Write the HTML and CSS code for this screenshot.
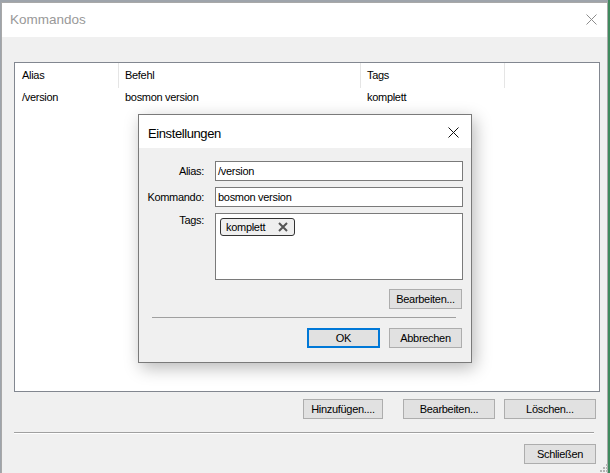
FILE: index.html
```html
<!DOCTYPE html>
<html>
<head>
<meta charset="utf-8">
<link rel="stylesheet" href="styles.css">
</head>
<body>
<div class="desk">
  <div class="win">
    <div class="titlebar">
      <span class="title">Kommandos</span>
      <svg class="xclose" width="11" height="11" viewBox="0 0 11 11"><path d="M0.5 0.5 L10.5 10.5 M10.5 0.5 L0.5 10.5" stroke="#8c8c8c" stroke-width="1" fill="none"/></svg>
    </div>
    <div class="content">
      <div class="list">
        <div class="lrow head">
          <div class="c c1">Alias</div>
          <div class="c c2">Befehl</div>
          <div class="c c3">Tags</div>
          <div class="c c4"></div>
        </div>
        <div class="lrow item">
          <div class="c c1">/version</div>
          <div class="c c2">bosmon version</div>
          <div class="c c3">komplett</div>
        </div>
      </div>
      <div class="btnrow">
        <button class="btn b-add">Hinzufügen....</button>
        <button class="btn b-edit">Bearbeiten...</button>
        <button class="btn b-del">Löschen...</button>
      </div>
      <div class="sep"></div>
      <div class="btnrow close-row">
        <button class="btn b-close">Schließen</button>
      </div>
    </div>
    <svg class="grip" width="9" height="9" viewBox="0 0 9 9">
      <rect x="6" y="0" width="2" height="2" fill="#b4b4b4"/>
      <rect x="3" y="3" width="2" height="2" fill="#b4b4b4"/>
      <rect x="6" y="3" width="2" height="2" fill="#b4b4b4"/>
      <rect x="0" y="6" width="2" height="2" fill="#b4b4b4"/>
      <rect x="3" y="6" width="2" height="2" fill="#b4b4b4"/>
      <rect x="6" y="6" width="2" height="2" fill="#b4b4b4"/>
    </svg>
  </div>

  <div class="dlg">
    <div class="dtitlebar">
      <span class="dtitle">Einstellungen</span>
      <svg class="dxclose" width="11" height="11" viewBox="0 0 11 11"><path d="M0.5 0.5 L10.5 10.5 M10.5 0.5 L0.5 10.5" stroke="#111" stroke-width="1" fill="none"/></svg>
    </div>
    <div class="dbody">
      <div class="form">
        <label class="lbl">Alias:</label>
        <div class="inp">/version</div>
        <label class="lbl">Kommando:</label>
        <div class="inp">bosmon version</div>
        <label class="lbl lbl-top">Tags:</label>
        <div class="tagbox">
          <span class="chip">komplett
            <svg class="chipx" width="10" height="10" viewBox="0 0 10 10"><path d="M1 1 L9 9 M9 1 L1 9" stroke="#555" stroke-width="2" fill="none"/></svg>
          </span>
        </div>
      </div>
      <div class="drow r1">
        <button class="btn db">Bearbeiten...</button>
      </div>
      <div class="dsep"></div>
      <div class="drow r2">
        <button class="btn db ok">OK</button>
        <button class="btn db">Abbrechen</button>
      </div>
    </div>
  </div>
</div>
</body>
</html>
```
FILE: styles.css
```css
html, body {
  margin: 0;
  padding: 0;
}
body {
  font-family: "Liberation Sans", Arial, sans-serif;
  font-size: 11px;
  letter-spacing: -0.3px;
  color: #000;
}
.desk {
  position: relative;
  width: 610px;
  height: 473px;
  overflow: hidden;
  background: linear-gradient(to right, #9ea4ab 0, #9ea4ab 608px, #3f8a5e 608px);
}
.win {
  position: relative;
  box-sizing: border-box;
  margin: 2px 0 0 1px;
  width: 607px;
  height: 480px;
  border: 1px solid #a8a8a8;
  background: #f0f0f0;
}
.titlebar {
  height: 34px;
  background: #fff;
  display: flex;
  align-items: center;
  justify-content: space-between;
  padding: 0 10px 0 8px;
}
.title {
  font-size: 13.5px;
  letter-spacing: 0;
  color: #999;
  margin-top: -1px;
}
.xclose {
  margin-top: -2px;
}
.content {
  display: flex;
  flex-direction: column;
  align-items: flex-start;
  padding: 25px 11px 0 12px;
}
.list {
  box-sizing: border-box;
  width: 586px;
  height: 330px;
  border: 1px solid #828790;
  background: #fff;
}
.lrow {
  display: flex;
}
.lrow.head {
  height: 25px;
  align-items: center;
}
.lrow.item {
  height: 18px;
  align-items: center;
}
.c {
  box-sizing: border-box;
  padding-left: 6px;
  white-space: nowrap;
}
.c1 { width: 104px; padding-left: 7px; }
.c2 { width: 242px; }
.c3 { width: 144px; }
.head .c {
  height: 25px;
  line-height: 25px;
  border-right: 1px solid #e5e5e5;
}
.head .c4 {
  width: 1px;
  border-right: none;
}
.btnrow {
  display: flex;
  justify-content: flex-end;
  gap: 9px;
  width: 100%;
  margin-top: 7px;
}
.btn {
  box-sizing: border-box;
  height: 20px;
  padding: 0;
  border: 1px solid #adadad;
  background: #e1e1e1;
  font-family: "Liberation Sans", Arial, sans-serif;
  font-size: 11px;
  letter-spacing: -0.3px;
  color: #000;
}
.b-add { width: 80px; margin-right: 11px; }
.b-edit { width: 92px; }
.b-del { width: 92px; }
.sep {
  width: 580px;
  height: 1px;
  background: #a0a0a0;
  border-bottom: 1px solid #fff;
  margin-top: 13px;
}
.close-row {
  margin-top: 10px;
}
.b-close { width: 72px; }
.grip {
  position: absolute;
  left: 598px;
  top: 461px;
}

/* Dialog */
.dlg {
  position: absolute;
  left: 138px;
  top: 114px;
  box-sizing: border-box;
  width: 334px;
  height: 249px;
  border: 1px solid #7a7a7a;
  background: #f0f0f0;
  box-shadow: 3px 5px 16px rgba(0, 0, 0, 0.28);
}
.dtitlebar {
  height: 33px;
  background: #fff;
  display: flex;
  align-items: center;
  justify-content: space-between;
  padding: 0 12px 0 9px;
}
.dtitle {
  font-size: 13px;
  letter-spacing: -0.4px;
  color: #000;
  margin-top: 3px;
}
.dxclose {
  margin-top: 2px;
}
.dbody {
  display: flex;
  flex-direction: column;
  padding-top: 13px;
}
.form {
  display: grid;
  grid-template-columns: 65px 248px;
  grid-template-rows: 20px 20px 67px;
  column-gap: 11px;
  row-gap: 6px;
}
.lbl {
  text-align: right;
  align-self: center;
  color: #000;
}
.lbl-top {
  align-self: start;
  padding-top: 1px;
}
.inp {
  box-sizing: border-box;
  border: 1px solid #7a7a7a;
  background: #fff;
  padding-left: 2px;
  line-height: 18px;
  white-space: nowrap;
}
.tagbox {
  box-sizing: border-box;
  border: 1px solid #7a7a7a;
  background: #fff;
  padding: 4px;
  display: flex;
  align-items: flex-start;
}
.chip {
  box-sizing: border-box;
  display: inline-flex;
  align-items: center;
  width: 75px;
  height: 18px;
  border: 1px solid #333;
  border-radius: 3px;
  background: #efefef;
  padding-left: 5px;
}
.chipx {
  margin-left: 13px;
}
.drow {
  display: flex;
  justify-content: flex-end;
  gap: 9px;
  padding-right: 9px;
}
.r1 { margin-top: 9px; }
.r2 { margin-top: 10px; }
.db { width: 73px; }
.ok {
  border: 2px solid #0078d7;
}
.dsep {
  margin: 8px 0 0 13px;
  width: 304px;
  height: 1px;
  background: #a0a0a0;
}
```
